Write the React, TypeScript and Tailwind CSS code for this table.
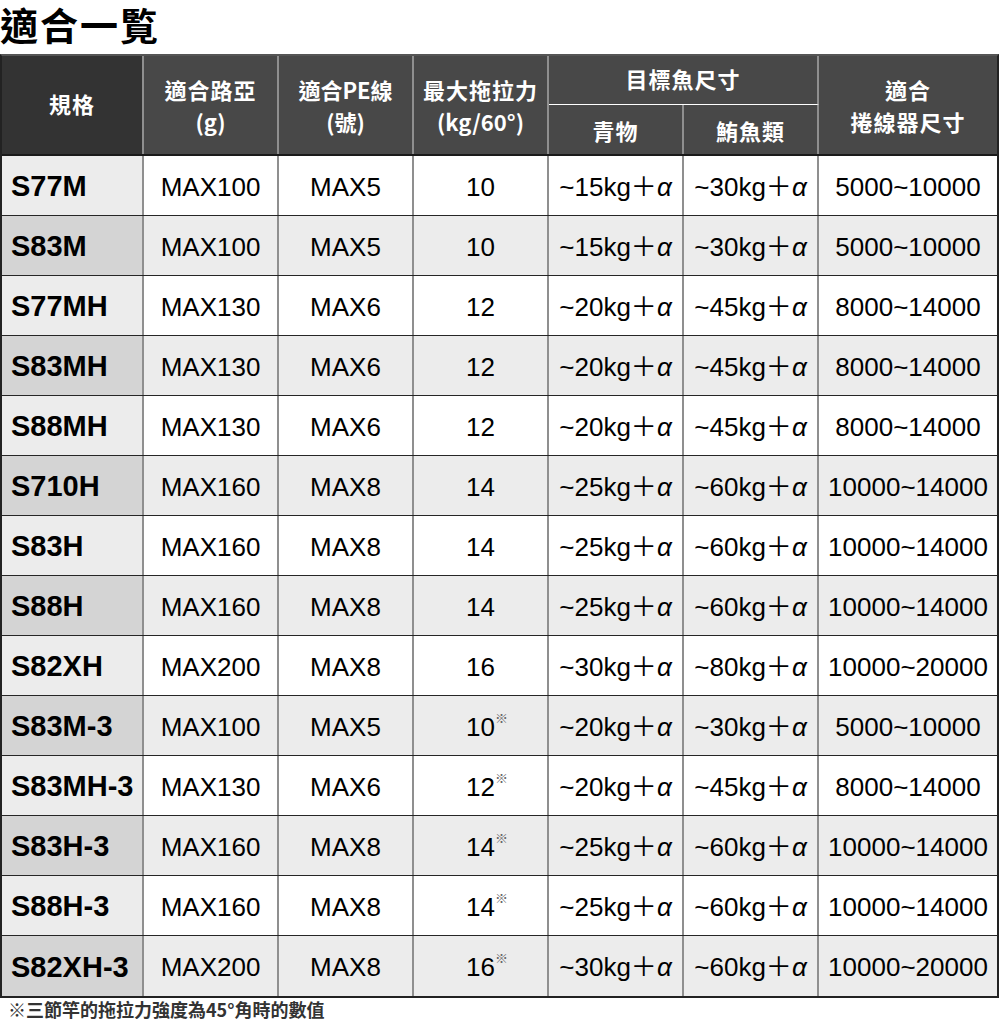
import React from "react";

type Row = { m: string; lure: string; pe: string; drag: string; star?: boolean; a: string; b: string; reel: string };

const rows: Row[] = [
  { m: "S77M", lure: "MAX100", pe: "MAX5", drag: "10", a: "15", b: "30", reel: "5000~10000" },
  { m: "S83M", lure: "MAX100", pe: "MAX5", drag: "10", a: "15", b: "30", reel: "5000~10000" },
  { m: "S77MH", lure: "MAX130", pe: "MAX6", drag: "12", a: "20", b: "45", reel: "8000~14000" },
  { m: "S83MH", lure: "MAX130", pe: "MAX6", drag: "12", a: "20", b: "45", reel: "8000~14000" },
  { m: "S88MH", lure: "MAX130", pe: "MAX6", drag: "12", a: "20", b: "45", reel: "8000~14000" },
  { m: "S710H", lure: "MAX160", pe: "MAX8", drag: "14", a: "25", b: "60", reel: "10000~14000" },
  { m: "S83H", lure: "MAX160", pe: "MAX8", drag: "14", a: "25", b: "60", reel: "10000~14000" },
  { m: "S88H", lure: "MAX160", pe: "MAX8", drag: "14", a: "25", b: "60", reel: "10000~14000" },
  { m: "S82XH", lure: "MAX200", pe: "MAX8", drag: "16", a: "30", b: "80", reel: "10000~20000" },
  { m: "S83M-3", lure: "MAX100", pe: "MAX5", drag: "10", star: true, a: "20", b: "30", reel: "5000~10000" },
  { m: "S83MH-3", lure: "MAX130", pe: "MAX6", drag: "12", star: true, a: "20", b: "45", reel: "8000~14000" },
  { m: "S83H-3", lure: "MAX160", pe: "MAX8", drag: "14", star: true, a: "25", b: "60", reel: "10000~14000" },
  { m: "S88H-3", lure: "MAX160", pe: "MAX8", drag: "14", star: true, a: "25", b: "60", reel: "10000~14000" },
  { m: "S82XH-3", lure: "MAX200", pe: "MAX8", drag: "16", star: true, a: "30", b: "60", reel: "10000~20000" },
];

const font = { fontFamily: '"Liberation Sans", "Noto Sans CJK TC", sans-serif' };
const cjk = { fontFamily: '"Noto Sans CJK TC", "Liberation Sans", sans-serif' };

const cols = "grid grid-cols-[142px_135px_135px_135px_135px_135px_1fr]";

function Kg({ v }: { v: string }) {
  return (
    <span className="whitespace-nowrap">
      ~{v}kg<span>＋</span>
      <span className="italic">α</span>
    </span>
  );
}

export default function App() {
  return (
    <div className="w-[1000px] bg-white text-black" style={font}>
      <div className="h-[54px] flex items-center pb-[6px]">
        <h1 className="text-[38px] font-bold leading-[46px] tracking-[2px] whitespace-nowrap" style={cjk}>適合一覧</h1>
      </div>
      <div className="w-[999px] border-2 border-[#222] border-t-[#555]">
        {/* header */}
        <div className={`${cols} grid-rows-[49px_49px] border-b-2 border-[#1a1a1a] text-white font-bold text-[22px] leading-[32px]`} style={cjk}>
          <div className="row-span-2 bg-[#333333] border-r-2 border-[#8f8f8f] flex items-center justify-center tracking-[1px] pb-[4px]">規格</div>
          <div className="row-span-2 bg-[#484848] border-r-2 border-[#8f8f8f] flex flex-col items-center justify-center">
            <span className="tracking-[1px]">適合路亞</span>
            <span>(g)</span>
          </div>
          <div className="row-span-2 bg-[#484848] border-r-2 border-[#8f8f8f] flex flex-col items-center justify-center">
            <span>適合PE線</span>
            <span>(號)</span>
          </div>
          <div className="row-span-2 bg-[#484848] border-r-2 border-[#8f8f8f] flex flex-col items-center justify-center">
            <span className="tracking-[1px]">最大拖拉力</span>
            <span>(kg/60°)</span>
          </div>
          <div className="col-span-2 bg-[#484848] border-r-2 border-b border-[#8f8f8f] border-b-white flex items-center justify-center pb-[4px] tracking-[1px]">目標魚尺寸</div>
          <div className="row-span-2 bg-[#484848] flex flex-col items-center justify-center tracking-[1px]">
            <span>適合</span>
            <span>捲線器尺寸</span>
          </div>
          <div className="bg-[#484848] border-r-2 border-[#8f8f8f] flex items-center justify-center tracking-[1px]">青物</div>
          <div className="bg-[#484848] border-r-2 border-[#8f8f8f] flex items-center justify-center tracking-[1px]">鮪魚類</div>
        </div>
        {/* body */}
        {rows.map((r, i) => {
          const even = i % 2 === 1;
          const first = even ? "bg-[#d4d4d4]" : "bg-[#ececec]";
          const rest = even ? "bg-[#ececec]" : "bg-white";
          const last = i === rows.length - 1;
          const cell = `border-r-2 border-[#8f8f8f] flex items-center justify-center pt-[3px] ${rest}`;
          return (
            <div key={r.m} className={`${cols} h-[60px] text-[26px] ${last ? "" : "border-b border-[#262626]"}`}>
              <div className={`border-r-2 border-[#8f8f8f] flex items-center pl-[9px] pt-[3px] font-bold text-[29px] ${first}`}>{r.m}</div>
              <div className={cell}>{r.lure}</div>
              <div className={cell}>{r.pe}</div>
              <div className={cell}>
                <span className="relative">
                  {r.drag}
                  {r.star && (
                    <span className="absolute left-full top-[3px] text-[13px] leading-none text-[#666]" style={cjk}>※</span>
                  )}
                </span>
              </div>
              <div className={cell}><Kg v={r.a} /></div>
              <div className={cell}><Kg v={r.b} /></div>
              <div className={`flex items-center justify-center pt-[3px] ${rest}`}>{r.reel}</div>
            </div>
          );
        })}
      </div>
      <div className="pl-[8px] pt-[1px] text-[18px] font-bold leading-[20px] text-[#333] whitespace-nowrap" style={cjk}>
        ※三節竿的拖拉力強度為45°角時的數值
      </div>
    </div>
  );
}
